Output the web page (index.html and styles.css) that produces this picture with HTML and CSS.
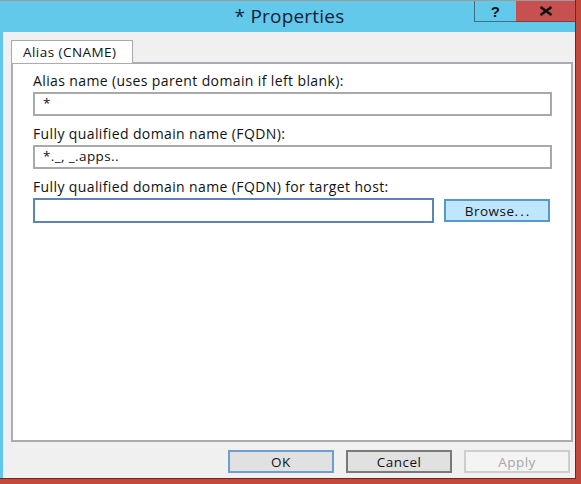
FILE: index.html
```html
<!DOCTYPE html>
<html>
<head>
<meta charset="utf-8">
<link rel="stylesheet" href="styles.css">
</head>
<body>
<div class="frame">
  <div class="window">
    <div class="titlebar">
      <div class="spacer"></div>
      <div class="title">* Properties</div>
      <div class="caption">
        <div class="cap help">?</div>
        <div class="cap close">
          <svg width="14" height="10" viewBox="0 0 14 10"><path d="M1.5 1 L12.5 9 M12.5 1 L1.5 9" stroke="#111" stroke-width="2.6" fill="none"/></svg>
        </div>
      </div>
    </div>
    <div class="body">
      <div class="tabs">
        <div class="tab">Alias (CNAME)</div>
      </div>
      <div class="panel">
        <div class="field">
          <div class="label">Alias name (uses parent domain if left blank):</div>
          <div class="input">*</div>
        </div>
        <div class="field">
          <div class="label">Fully qualified domain name (FQDN):</div>
          <div class="input">*._, _.apps..</div>
        </div>
        <div class="field">
          <div class="label">Fully qualified domain name (FQDN) for target host:</div>
          <div class="row">
            <div class="input focus"></div>
            <div class="btn browse">Browse<span class="dots">...</span></div>
          </div>
        </div>
      </div>
      <div class="actions">
        <div class="btn ok">OK</div>
        <div class="btn cancel">Cancel</div>
        <div class="btn apply">Apply</div>
      </div>
    </div>
  </div>
</div>
</body>
</html>
```
FILE: styles.css
```css
* { box-sizing: border-box; }
html, body { margin: 0; padding: 0; background: #ffffff; }
body {
  font-family: "Open Sans", "Liberation Sans", sans-serif;
  font-size: 14px;
  letter-spacing: 0.38px;
  color: #111;
}
.frame {
  width: 581px;
  height: 484px;
  background: #c4483c;
  padding: 0 5px 5px 0;
  display: flex;
}
.window {
  flex: 1;
  display: flex;
  flex-direction: column;
  border-right: 1px solid #6e2a22;
  border-bottom: 1px solid #6e2a22;
  background: #62c8ea;
}
.titlebar {
  height: 32px;
  border-top: 1px solid #9c9c9c;
  display: grid;
  grid-template-columns: 1fr auto 1fr;
  background: #63c9ea;
}
.title {
  font-size: 19px;
  letter-spacing: 0.2px;
  color: #17213a;
  line-height: 30px;
  padding-left: 4px;
}
.caption {
  justify-self: end;
  align-self: start;
  display: flex;
}
.cap {
  height: 21px;
  display: flex;
  align-items: center;
  justify-content: center;
  border-bottom: 1px solid #3d6f86;
}
.help {
  width: 42px;
  border-left: 1px solid #3d6f86;
  font-weight: bold;
  font-size: 15px;
  color: #111;
  font-family: "Liberation Sans", sans-serif;
}
.close {
  width: 59px;
  background: #c75050;
  border-bottom-color: #8a3a36;
}
.body {
  flex: 1;
  background: #f0f0f0;
  margin-left: 3px;
  padding: 8px 2px 0 8px;
  display: flex;
  flex-direction: column;
}
.tabs { display: flex; }
.tab {
  width: 122px;
  height: 23px;
  background: #ffffff;
  border: 1px solid #a9a9a9;
  border-bottom: none;
  padding: 2px 0 0 11px;
  margin-bottom: -1px;
  position: relative;
  z-index: 1;
  font-size: 13.5px;
  letter-spacing: 0.45px;
}
.panel {
  height: 380px;
  background: #ffffff;
  border: 2px solid #acacb0;
  padding: 9px 19px 0 20px;
  display: flex;
  flex-direction: column;
  gap: 10px;
}
.label {
  line-height: 16px;
  margin-bottom: 3px;
}
.input {
  height: 24px;
  border: 2px solid #a9a9a9;
  background: #fff;
  padding: 0 8px;
  line-height: 19px;
  font-size: 13.5px;
}
.row {
  display: flex;
  gap: 10px;
}
.input.focus {
  width: 401px;
  height: 25px;
  border-color: #5a86b4;
}
.btn {
  width: 106px;
  height: 23px;
  display: flex;
  align-items: center;
  justify-content: center;
  border: 2px solid #adadad;
  background: #e1e1e1;
  font-size: 13.5px;
  letter-spacing: 0.5px;
}
.dots { letter-spacing: 2px; margin-right: -2px; }
.browse {
  background: #bee6fd;
  border-color: #5b96c8;
  margin-top: 1px;
}
.actions {
  display: flex;
  justify-content: flex-end;
  gap: 12px;
  padding: 8px 3px 0 0;
}
.ok { border-color: #6e9fd0; }
.cancel { border-color: #7a7a7a; }
.apply {
  background: #f4f4f4;
  border-color: #cdcdcd;
  color: #a6a6a6;
}
```
